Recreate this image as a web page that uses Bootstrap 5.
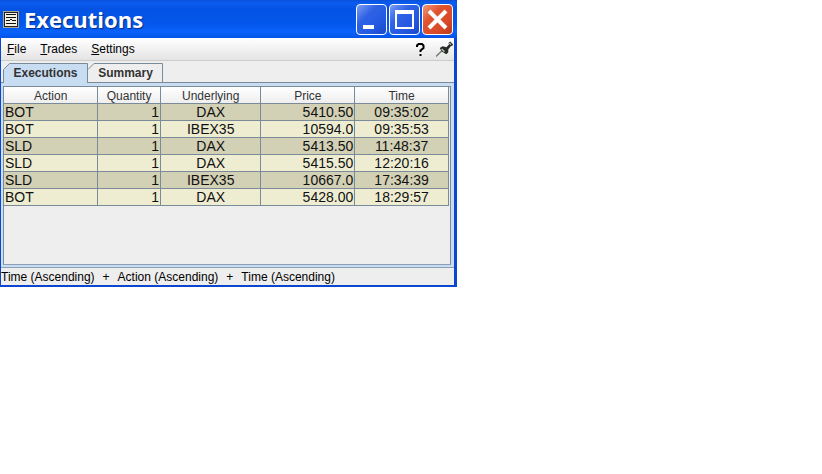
<!DOCTYPE html>
<html lang="en">
<head>
<meta charset="utf-8">
<meta name="viewport" content="width=device-width, initial-scale=1">
<title>Executions</title>
<link href="https://cdn.jsdelivr.net/npm/bootstrap@5.3.0/dist/css/bootstrap.min.css" rel="stylesheet">
<style>
body { font-family: "Liberation Sans", Arial, sans-serif; font-size: 12px; line-height: 16px; color: #000; background: #fff; }
.app-window { max-width: 457px; background: #eee; border: solid #0a46d0; border-width: 0 3px 2px 1px; }
.title-bar { height: 38px; margin: 0 -3px 0 -1px; padding: 0 4px 0 3px; gap: 5px; background: linear-gradient(#0b50d8 0, #0a5cf0 3px, #0453e4 9px, #0457ec 24px, #0863fb 32px, #0454e6 38px); border-radius: 0 4px 0 0; }
.title-text { font: 700 22px/30px "Open Sans", sans-serif; color: #fff; text-shadow: 1px 1px 1px #0b2a86; }
.title-controls { gap: 2px; }
.win-btn { width: 31px; height: 31px; padding: 0; border: 1px solid #fff; border-radius: 4px; background: linear-gradient(135deg, #7d9df4, #2f62e6 35%, #2459e0 70%, #1c48c4); }
.win-btn.close-btn { background: linear-gradient(135deg, #f0997c, #e0532f 35%, #d94a28 70%, #b93a1c); }
.menu-row { height: 23px; padding: 0 1px 0 6px; background: linear-gradient(#fff, #e4e4e4); border-bottom: 1px solid #ccc; }
.menu-items { gap: 14px; }
.menu-btn { font-size: 12px; line-height: 16px; padding: 0; border: 0; color: #000; }
.tab-row { padding: 2px 0 0 2px; }
.tab-btn { position: relative; height: 19px; padding: 0; border: 0; background: none; font-weight: bold; font-size: 12px; line-height: 18px; color: #333; text-align: center; }
.tab-btn svg { position: absolute; inset: 0; width: 100%; height: 100%; }
.tab-btn span { position: relative; }
.tab-one { width: 85px; height: 20px; margin-bottom: -1px; }
.tab-two { width: 75px; }
.pane { background: #c8ddf2; border-top: 1px solid #7a8a99; padding: 3px 3px 2px 2px; }
.sheet { min-height: 179px; background: #eee; border: 1px solid #7a8a99; border-bottom-color: #8ba0b6; padding-right: 1px; }
.exec-table { table-layout: fixed; width: 100%; border-collapse: collapse; font-size: 14px; line-height: 16px; }
.exec-table th { height: 16px; padding: 2px 0 0; font-size: 12px; line-height: 14px; font-weight: normal; color: #333; text-align: center; background: linear-gradient(#fff, #eee); }
.exec-table td { height: 17px; padding: 0 1px; white-space: nowrap; color: #111; }
.exec-table th, .exec-table td { border: solid #7a8a99; border-width: 0 1px 1px 0; }
.exec-table tbody tr:nth-child(odd) { background: #d2d0b5; }
.exec-table tbody tr:nth-child(even) { background: #eeedd2; }
.c-action, .c-price, .c-time { width: 21.1%; }
.c-qty { width: 14.1%; }
.status-row { border-top: 1px solid #8ba0b6; padding-top: 2px; line-height: 15px; }
</style>
<script src="https://cdn.jsdelivr.net/npm/bootstrap@5.3.0/dist/js/bootstrap.bundle.min.js"></script>
</head>
<body>
<main class="app-window w-100">
  <header class="title-bar d-flex align-items-center">
    <svg width="16" height="17" viewBox="0 0 16 17" shape-rendering="crispEdges" aria-hidden="true">
      <rect width="16" height="17" fill="#a9a58f"/><rect x="1" y="1" width="14" height="15" fill="#222"/>
      <path d="M2 2h12v13H2z" fill="#f4f1e4"/>
      <path d="M3 3h10v1H3zM3 6h10v1H3zM3 9h4v1H3zM9 9h4v1H9zM3 12h10v1H3zM7 8h2v1H7z" fill="#111"/>
    </svg>
    <h1 class="title-text m-0 flex-grow-1">Executions</h1>
    <div class="d-flex title-controls">
      <button class="win-btn d-flex" type="button" aria-label="Minimize"><svg width="29" height="29" aria-hidden="true"><path d="M6 20h11v4H6z" fill="#fff"/></svg></button>
      <button class="win-btn d-flex" type="button" aria-label="Maximize"><svg width="29" height="29" aria-hidden="true"><path d="M5 5h19v19H5zM7 9v13h15V9z" fill="#fff" fill-rule="evenodd"/></svg></button>
      <button class="win-btn close-btn d-flex" type="button" aria-label="Close"><svg width="29" height="29" aria-hidden="true"><path d="M6 6L23 23M23 6L6 23" stroke="#fff" stroke-width="4"/></svg></button>
    </div>
  </header>
  <nav class="menu-row d-flex align-items-center" aria-label="Main">
    <div class="d-flex flex-grow-1 menu-items">
      <button class="btn menu-btn" type="button"><u>F</u>ile</button>
      <button class="btn menu-btn" type="button"><u>T</u>rades</button>
      <button class="btn menu-btn" type="button"><u>S</u>ettings</button>
    </div>
    <button class="btn menu-btn d-flex me-2" type="button" aria-label="Help"><svg width="16" height="17" viewBox="0 0 16 17" aria-hidden="true"><path d="M5 6V4.500L6.500 3H10l1.500 1.500V7L8.500 9.500V11" fill="none" stroke="#000" stroke-width="2"/><path d="M7.500 13h2v2h-2z"/></svg></button>
    <button class="btn menu-btn d-flex" type="button" aria-label="Pin"><svg width="17" height="17" viewBox="0 0 18 17" aria-hidden="true"><path d="M0 16L6 10" stroke="#777" stroke-width="1.500"/><path d="M4 7l3-2 4 1 3-3-1-1 2-2 3 3-1 2-1-.5-3 4v3l-2 2-5-3z" fill="#252a25"/><path d="M6 8l3 3M14 2l2 1" stroke="#bbc0bb" stroke-width="1.500"/></svg></button>
  </nav>
  <div class="tab-row d-flex" role="tablist">
    <button class="tab-btn tab-one" type="button" role="tab" aria-selected="true"><svg viewBox="0 0 85 20" preserveAspectRatio="none" aria-hidden="true"><path d="M.5 21V6.500l6-6h78V21" fill="#c8ddf2" stroke="#7a8a99"/></svg><span>Executions</span></button>
    <button class="tab-btn tab-two" type="button" role="tab" aria-selected="false"><svg viewBox="0 0 75 19" preserveAspectRatio="none" aria-hidden="true"><path d="M0 6.500l6-6h68.500V20" fill="#eee" stroke="#7a8a99"/></svg><span>Summary</span></button>
  </div>
  <section class="pane">
    <div class="sheet">
      <table class="exec-table">
        <colgroup><col class="c-action"><col class="c-qty"><col><col class="c-price"><col class="c-time"></colgroup>
        <thead><tr><th scope="col">Action</th><th scope="col">Quantity</th><th scope="col">Underlying</th><th scope="col">Price</th><th scope="col">Time</th></tr></thead>
        <tbody>
          <tr><td>BOT</td><td class="text-end">1</td><td class="text-center">DAX</td><td class="text-end">5410.50</td><td class="text-center">09:35:02</td></tr>
          <tr><td>BOT</td><td class="text-end">1</td><td class="text-center">IBEX35</td><td class="text-end">10594.0</td><td class="text-center">09:35:53</td></tr>
          <tr><td>SLD</td><td class="text-end">1</td><td class="text-center">DAX</td><td class="text-end">5413.50</td><td class="text-center">11:48:37</td></tr>
          <tr><td>SLD</td><td class="text-end">1</td><td class="text-center">DAX</td><td class="text-end">5415.50</td><td class="text-center">12:20:16</td></tr>
          <tr><td>SLD</td><td class="text-end">1</td><td class="text-center">IBEX35</td><td class="text-end">10667.0</td><td class="text-center">17:34:39</td></tr>
          <tr><td>BOT</td><td class="text-end">1</td><td class="text-center">DAX</td><td class="text-end">5428.00</td><td class="text-center">18:29:57</td></tr>
        </tbody>
      </table>
    </div>
  </section>
  <footer class="status-row d-flex gap-2"><span>Time (Ascending)</span><span>+</span><span>Action (Ascending)</span><span>+</span><span>Time (Ascending)</span></footer>
</main>
</body>
</html>
